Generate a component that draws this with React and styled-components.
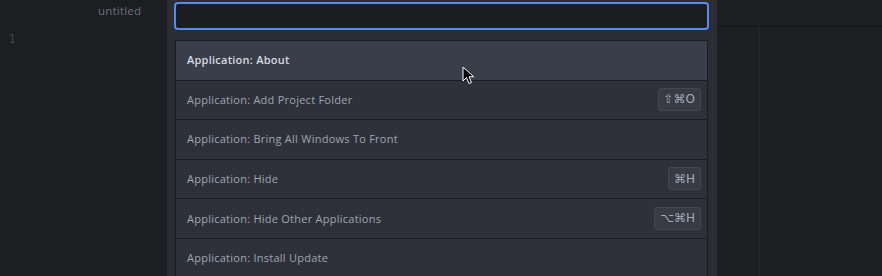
import React from 'react';
import styled, { createGlobalStyle } from 'styled-components';

const GlobalStyle = createGlobalStyle`
  html, body {
    margin: 0;
    padding: 0;
    background: #1c1e22;
    overflow: hidden;
  }
  body {
    font-family: "Open Sans", "DejaVu Sans", sans-serif;
  }
`;

const Workspace = styled.div`
  position: relative;
  display: flex;
  width: 882px;
  height: 276px;
  background: #1c1e22;
  overflow: hidden;
`;

const EditorPane = styled.div`
  display: flex;
  flex-direction: column;
  width: ${({ w }) => (w ? `${w}px` : 'auto')};
  flex: ${({ w }) => (w ? 'none' : '1')};
  background: #1c1e22;
`;

const TabBar = styled.div`
  height: 27px;
  box-sizing: border-box;
  padding: 3px 0 0 98px;
  border-bottom: 1px solid ${({ line }) => (line ? '#131417' : 'transparent')};
  font-size: 11.5px;
  letter-spacing: 0.2px;
  color: #6b717c;
`;

const Gutter = styled.div`
  padding: 4px 0 0 8px;
  font-size: 13px;
  color: #5a606b;
  font-family: "DejaVu Sans", sans-serif;
  font-weight: 300;
`;

const EditorBody = styled.div`
  flex: 1;
  display: flex;
`;

const WrapGuide = styled.div`
  margin-left: 42px;
  width: 1px;
  background: #25282d;
`;

const Palette = styled.div`
  width: 550px;
  box-sizing: border-box;
  padding: 2px 8px 0 7px;
  background: #2a2d34;
  display: flex;
  flex-direction: column;
  gap: 10px;
`;

const SearchInput = styled.input`
  box-sizing: border-box;
  width: 535px;
  height: 28px;
  background: #1b1d21;
  border: 2px solid #568af2;
  border-radius: 4px;
  outline: none;
  color: #d7dae0;
  font: inherit;
`;

const List = styled.div`
  margin-left: 1px;
  width: 533px;
  box-sizing: border-box;
  border: 1px solid #1a1c20;
  border-bottom: none;
  display: flex;
  flex-direction: column;
`;

const Row = styled.div`
  height: 39.6px;
  box-sizing: border-box;
  display: flex;
  align-items: center;
  justify-content: space-between;
  padding: 0 6px 1px 11px;
  border-bottom: 1px solid #1a1c20;
  background: ${({ selected }) => (selected ? '#3a3d4a' : '#2e3139')};
  color: ${({ selected }) => (selected ? '#d7dae0' : '#9ea5b3')};
  font-size: 11px;
  letter-spacing: 0.25px;
  font-weight: ${({ selected }) => (selected ? 600 : 400)};
`;

const Keys = styled.span`
  display: inline-flex;
  align-items: center;
  gap: 1px;
  height: 23px;
  box-sizing: border-box;
  padding: 0 5px;
  border-radius: 3px;
  background: #383b44;
  border: 1px solid #454852;
  color: #a3abba;
  font-size: 12px;
  letter-spacing: 0;
  font-weight: 400;
  font-family: "DejaVu Sans", sans-serif;
`;

const Pointer = styled.svg`
  position: absolute;
  left: 462px;
  top: 66px;
`;

const commands = [
  { label: 'Application: About', selected: true },
  { label: 'Application: Add Project Folder', keys: '⇧⌘O' },
  { label: 'Application: Bring All Windows To Front' },
  { label: 'Application: Hide', keys: '⌘H' },
  { label: 'Application: Hide Other Applications', keys: '⌥⌘H' },
  { label: 'Application: Install Update' },
];

export default function App() {
  return (
    <>
      <GlobalStyle />
      <Workspace>
        <EditorPane w={167}>
          <TabBar>untitled</TabBar>
          <Gutter>1</Gutter>
        </EditorPane>
        <Palette>
          <SearchInput />
          <List>
            {commands.map((c) => (
              <Row key={c.label} selected={c.selected}>
                <span>{c.label}</span>
                {c.keys && <Keys>{c.keys}</Keys>}
              </Row>
            ))}
          </List>
        </Palette>
        <EditorPane>
          <TabBar line />
          <EditorBody>
            <WrapGuide />
          </EditorBody>
        </EditorPane>
        <Pointer width="13" height="19" viewBox="0 0 13 19">
          <path
            d="M1 1 L1 15 L4.5 11.5 L7 17.5 L9.5 16.5 L7 10.8 L11.8 10.8 Z"
            fill="#000"
            stroke="#fff"
            strokeWidth="1"
            strokeLinejoin="round"
          />
        </Pointer>
      </Workspace>
    </>
  );
}
